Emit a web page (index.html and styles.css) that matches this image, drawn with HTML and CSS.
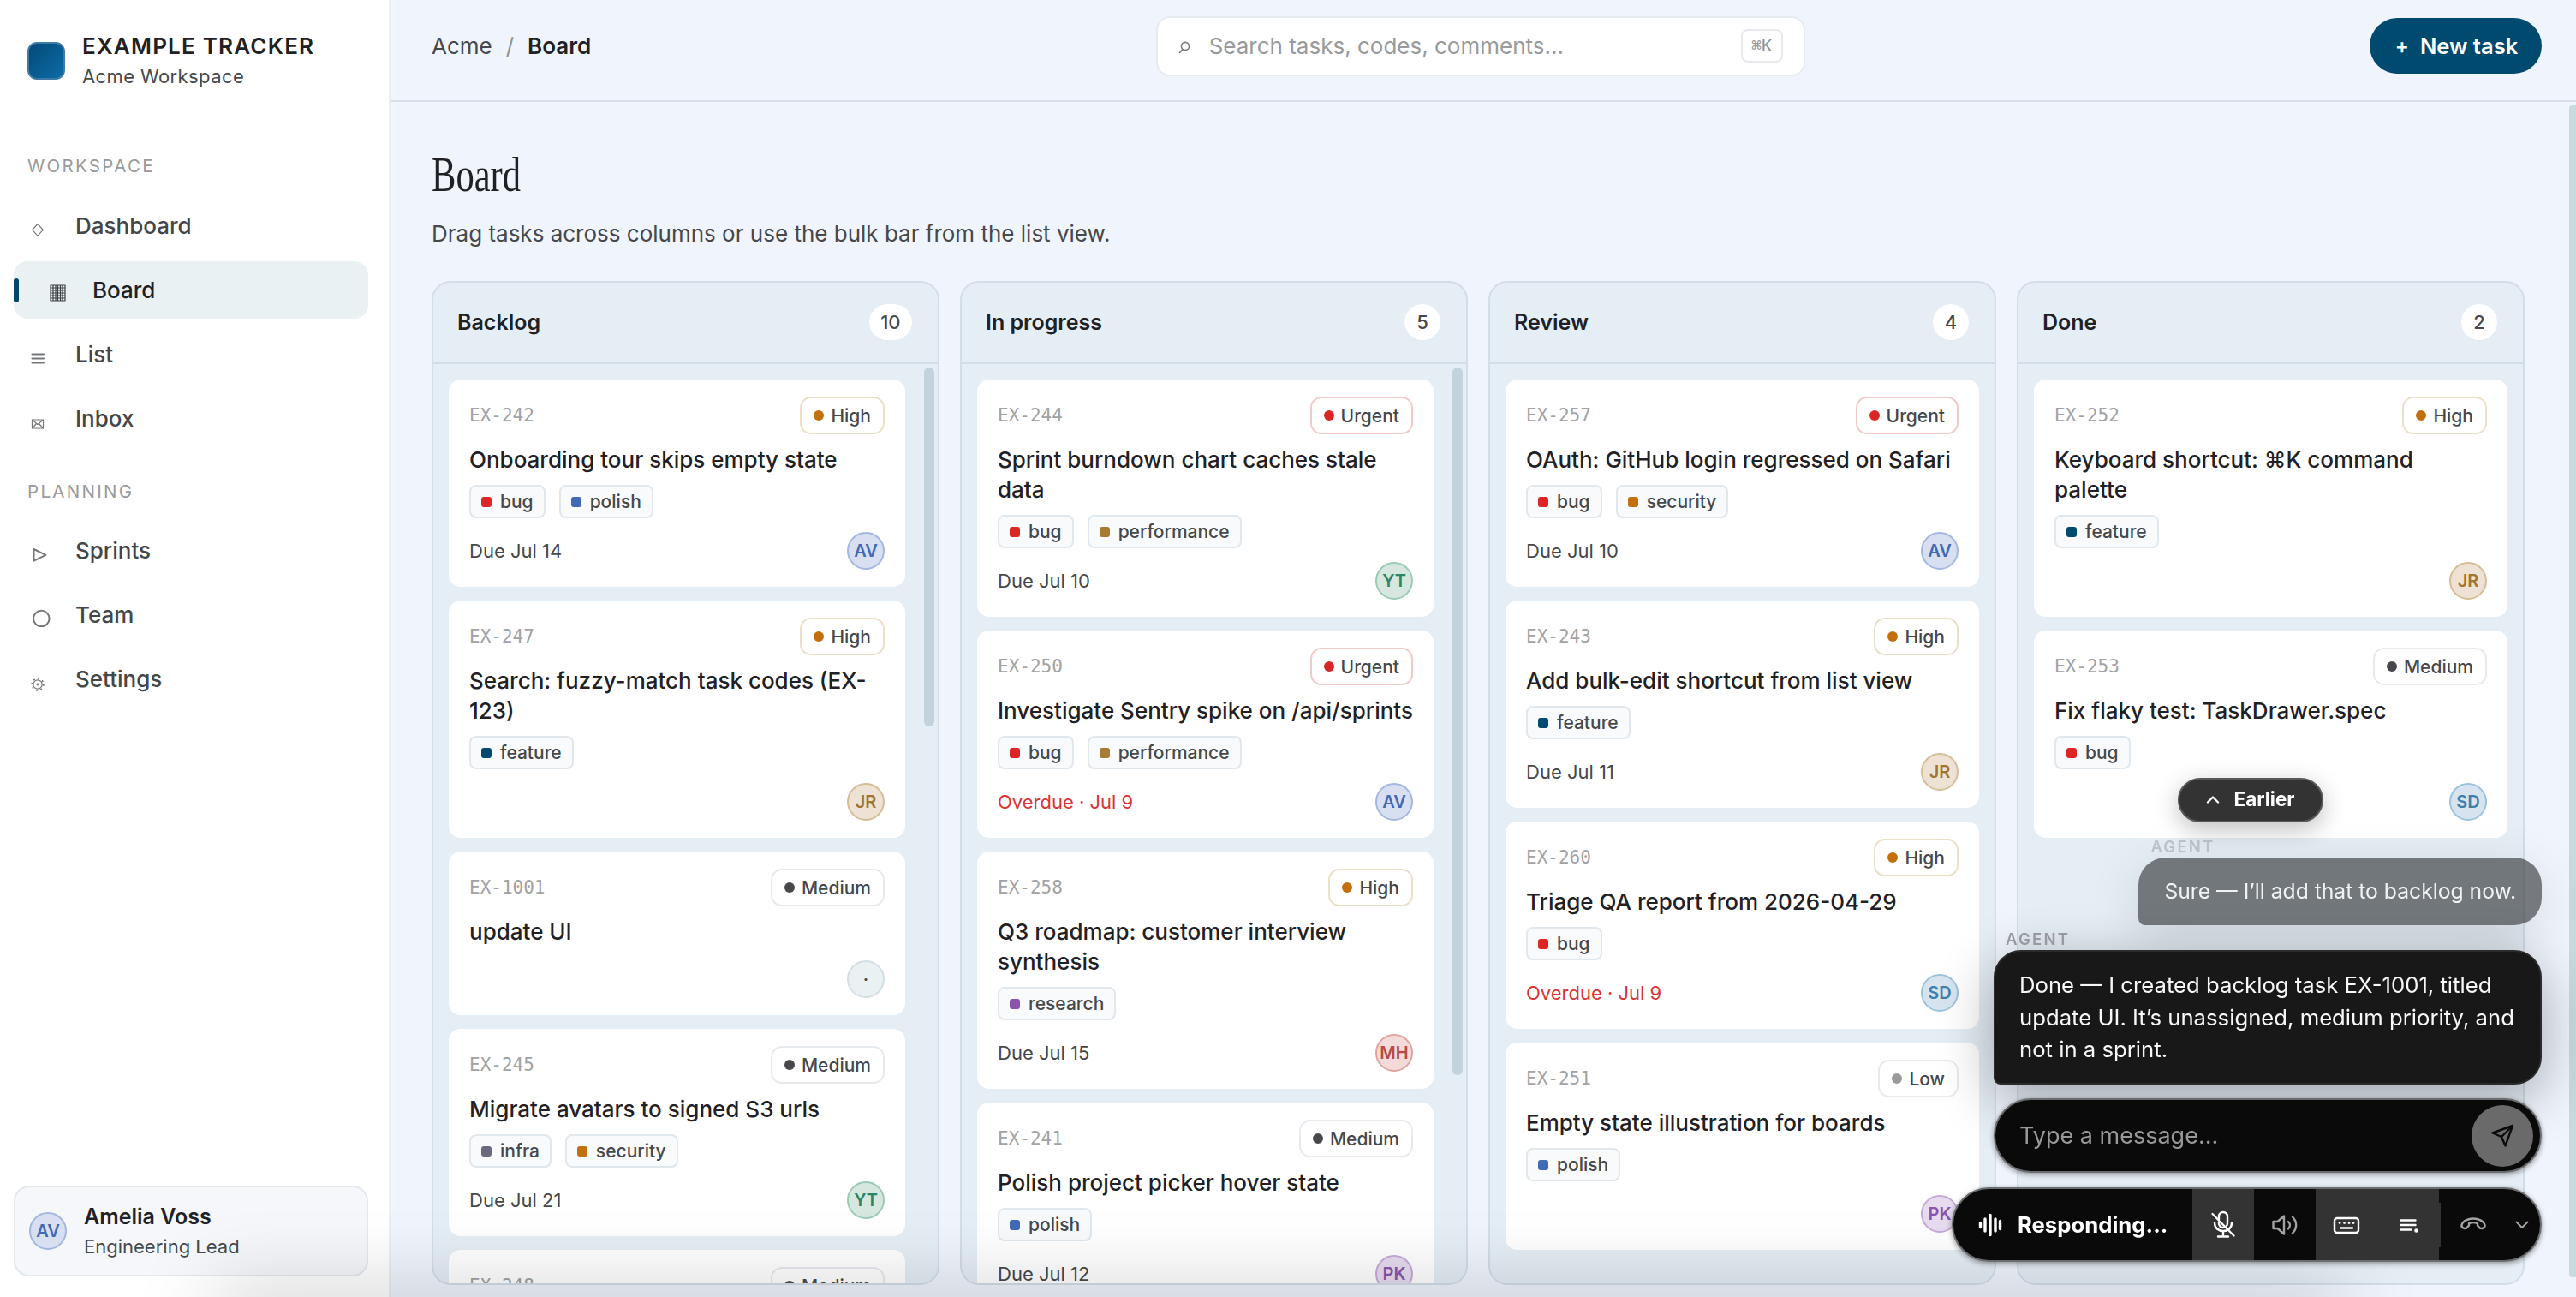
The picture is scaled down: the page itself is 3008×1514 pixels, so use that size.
FILE: index.html
```html
<!DOCTYPE html>
<html lang="en">
<head>
    <meta charset="UTF-8">
    <meta name="viewport" content="width=device-width, initial-scale=1.0">
    <title>Example Tracker - Board</title>
    <link rel="stylesheet" href="styles.css">
</head>
<body>
    <div class="app">
        <aside class="sidebar">
            <div class="brand">
                <div class="brand-logo"></div>
                <div>
                    <div class="brand-name">EXAMPLE TRACKER</div>
                    <div class="brand-sub">Acme Workspace</div>
                </div>
            </div>

            <div class="nav-label">WORKSPACE</div>
            <nav class="nav">
                <a class="nav-item">
                    <svg class="nav-icon" viewBox="0 0 28 28"><path d="M8 11.5l6.4 6.8L8 25.1 1.6 18.3z"/></svg>
                    Dashboard
                </a>
                <a class="nav-item active">
                    <span class="nav-bar"></span>
                    <svg class="nav-icon" viewBox="0 0 28 28"><path d="M3 8h17v18H3zM6 8v18M9 8v18M11.500 8v18M14.500 8v18M17 8v18M3 11h17M3 14h17M3 17h17M3 20h17M3 23h17"/></svg>
                    Board
                </a>
                <a class="nav-item">
                    <svg class="nav-icon thick" viewBox="0 0 28 28"><path d="M1.500 13.500h13.500M1.500 18.500h13.500M1.500 23.500h13.500"/></svg>
                    List
                </a>
                <a class="nav-item">
                    <svg class="nav-icon" viewBox="0 0 28 28"><path d="M1.500 15h13v10h-13zM1.500 15l6.500 5.500 6.500-5.500M1.500 25l5-5.500M14.500 25l-5-5.500M6 20h4"/></svg>
                    Inbox
                </a>
            </nav>

            <div class="nav-label planning">PLANNING</div>
            <nav class="nav">
                <a class="nav-item">
                    <svg class="nav-icon thick" viewBox="0 0 28 28"><path d="M3.500 12l14 6.800-14 6.800z"/></svg>
                    Sprints
                </a>
                <a class="nav-item">
                    <svg class="nav-icon thick" viewBox="0 0 28 28"><circle cx="12.300" cy="18" r="9.300"/></svg>
                    Team
                </a>
                <a class="nav-item">
                    <svg class="nav-icon" viewBox="0 0 28 28"><circle cx="8" cy="20" r="5.200"/><circle cx="8" cy="20" r=".8"/><circle class="teeth" cx="8" cy="20" r="6.800"/></svg>
                    Settings
                </a>
            </nav>

            <div class="user">
                <span class="avatar av">AV</span>
                <div>
                    <div class="user-name">Amelia Voss</div>
                    <div class="user-role">Engineering Lead</div>
                </div>
            </div>
        </aside>

        <div class="main">
            <header class="topbar">
                <div class="crumbs"><span>Acme</span><i>/</i><b>Board</b></div>
                <div class="search">
                    <svg class="search-icon" viewBox="0 0 14 16"><circle cx="8" cy="6" r="4.600"/><path d="M5 9.500L1.500 13.500"/></svg>
                    <span class="search-text">Search tasks, codes, comments…</span>
                    <kbd class="kbd">⌘K</kbd>
                </div>
                <button class="new-task"><span>+</span>New task</button>
            </header>

            <main class="page">
                <h1 class="page-title">Board</h1>
                <p class="page-sub">Drag tasks across columns or use the bulk bar from the list view.</p>

                <div class="board">
                    <section class="column">
                        <div class="column-head"><h2>Backlog</h2><span class="count">10</span></div>
                        <div class="column-body scrolls">
                            <article class="card">
                                <div class="card-top"><span class="code">EX-242</span><span class="prio high">High</span></div>
                                <div class="card-title">Onboarding tour skips empty state</div>
                                <div class="tags"><span class="tag bug">bug</span><span class="tag polish">polish</span></div>
                                <div class="card-foot"><span>Due Jul 14</span><span class="avatar av">AV</span></div>
                            </article>
                            <article class="card">
                                <div class="card-top"><span class="code">EX-247</span><span class="prio high">High</span></div>
                                <div class="card-title">Search: fuzzy-match task codes (EX-123)</div>
                                <div class="tags"><span class="tag feature">feature</span></div>
                                <div class="card-foot"><span></span><span class="avatar jr">JR</span></div>
                            </article>
                            <article class="card">
                                <div class="card-top"><span class="code">EX-1001</span><span class="prio medium">Medium</span></div>
                                <div class="card-title">update UI</div>
                                <div class="card-foot"><span></span><span class="avatar none">·</span></div>
                            </article>
                            <article class="card">
                                <div class="card-top"><span class="code">EX-245</span><span class="prio medium">Medium</span></div>
                                <div class="card-title">Migrate avatars to signed S3 urls</div>
                                <div class="tags"><span class="tag infra">infra</span><span class="tag security">security</span></div>
                                <div class="card-foot"><span>Due Jul 21</span><span class="avatar yt">YT</span></div>
                            </article>
                            <article class="card">
                                <div class="card-top"><span class="code">EX-248</span><span class="prio medium">Medium</span></div>
                            </article>
                        </div>
                        <div class="thumb thumb-backlog"></div>
                    </section>

                    <section class="column">
                        <div class="column-head"><h2>In progress</h2><span class="count">5</span></div>
                        <div class="column-body scrolls">
                            <article class="card">
                                <div class="card-top"><span class="code">EX-244</span><span class="prio urgent">Urgent</span></div>
                                <div class="card-title">Sprint burndown chart caches stale data</div>
                                <div class="tags"><span class="tag bug">bug</span><span class="tag performance">performance</span></div>
                                <div class="card-foot"><span>Due Jul 10</span><span class="avatar yt">YT</span></div>
                            </article>
                            <article class="card">
                                <div class="card-top"><span class="code">EX-250</span><span class="prio urgent">Urgent</span></div>
                                <div class="card-title">Investigate Sentry spike on /api/sprints</div>
                                <div class="tags"><span class="tag bug">bug</span><span class="tag performance">performance</span></div>
                                <div class="card-foot"><span class="overdue">Overdue · Jul 9</span><span class="avatar av">AV</span></div>
                            </article>
                            <article class="card">
                                <div class="card-top"><span class="code">EX-258</span><span class="prio high">High</span></div>
                                <div class="card-title">Q3 roadmap: customer interview synthesis</div>
                                <div class="tags"><span class="tag research">research</span></div>
                                <div class="card-foot"><span>Due Jul 15</span><span class="avatar mh">MH</span></div>
                            </article>
                            <article class="card">
                                <div class="card-top"><span class="code">EX-241</span><span class="prio medium">Medium</span></div>
                                <div class="card-title">Polish project picker hover state</div>
                                <div class="tags"><span class="tag polish">polish</span></div>
                                <div class="card-foot"><span>Due Jul 12</span><span class="avatar pk">PK</span></div>
                            </article>
                        </div>
                        <div class="thumb thumb-progress"></div>
                    </section>

                    <section class="column">
                        <div class="column-head"><h2>Review</h2><span class="count">4</span></div>
                        <div class="column-body">
                            <article class="card">
                                <div class="card-top"><span class="code">EX-257</span><span class="prio urgent">Urgent</span></div>
                                <div class="card-title">OAuth: GitHub login regressed on Safari</div>
                                <div class="tags"><span class="tag bug">bug</span><span class="tag security">security</span></div>
                                <div class="card-foot"><span>Due Jul 10</span><span class="avatar av">AV</span></div>
                            </article>
                            <article class="card">
                                <div class="card-top"><span class="code">EX-243</span><span class="prio high">High</span></div>
                                <div class="card-title">Add bulk-edit shortcut from list view</div>
                                <div class="tags"><span class="tag feature">feature</span></div>
                                <div class="card-foot"><span>Due Jul 11</span><span class="avatar jr">JR</span></div>
                            </article>
                            <article class="card">
                                <div class="card-top"><span class="code">EX-260</span><span class="prio high">High</span></div>
                                <div class="card-title">Triage QA report from 2026-04-29</div>
                                <div class="tags"><span class="tag bug">bug</span></div>
                                <div class="card-foot"><span class="overdue">Overdue · Jul 9</span><span class="avatar sd">SD</span></div>
                            </article>
                            <article class="card">
                                <div class="card-top"><span class="code">EX-251</span><span class="prio low">Low</span></div>
                                <div class="card-title">Empty state illustration for boards</div>
                                <div class="tags"><span class="tag polish">polish</span></div>
                                <div class="card-foot"><span></span><span class="avatar pk">PK</span></div>
                            </article>
                        </div>
                    </section>

                    <section class="column">
                        <div class="column-head"><h2>Done</h2><span class="count">2</span></div>
                        <div class="column-body">
                            <article class="card">
                                <div class="card-top"><span class="code">EX-252</span><span class="prio high">High</span></div>
                                <div class="card-title">Keyboard shortcut: ⌘K command palette</div>
                                <div class="tags"><span class="tag feature">feature</span></div>
                                <div class="card-foot"><span></span><span class="avatar jr">JR</span></div>
                            </article>
                            <article class="card">
                                <div class="card-top"><span class="code">EX-253</span><span class="prio medium">Medium</span></div>
                                <div class="card-title">Fix flaky test: TaskDrawer.spec</div>
                                <div class="tags"><span class="tag bug">bug</span></div>
                                <div class="card-foot"><span></span><span class="avatar sd">SD</span></div>
                            </article>
                        </div>
                    </section>
                </div>
            </main>
            <div class="page-thumb"></div>
        </div>
    </div>

    <div class="bottom-shade"></div>

    <div class="agent">
        <div class="earlier-row">
            <button class="earlier">
                <svg class="chev" viewBox="0 0 16 10"><path d="M2 8.500l6-6 6 6"/></svg>
                Earlier
            </button>
        </div>
        <div class="msg faded">
            <div class="msg-from">AGENT</div>
            <div class="bubble">Sure — I’ll add that to backlog now.</div>
        </div>
        <div class="msg">
            <div class="msg-from">AGENT</div>
            <div class="bubble">Done — I created backlog task EX-1001, titled update UI. It’s unassigned, medium priority, and not in a sprint.</div>
        </div>
        <div class="composer">
            <span class="placeholder">Type a message...</span>
            <button class="send">
                <svg viewBox="0 0 32 32"><path d="M28 4L4.500 12.500l10.500 4.500 4.500 10.500zM28 4L15 17"/></svg>
            </button>
        </div>
        <div class="callbar">
            <div class="status">
                <svg class="wave" viewBox="0 0 28 28"><path d="M2.500 11.500v5M8 7v14M14 2.500v23M20 7v14M25.500 9.500v9"/></svg>
                Responding...
            </div>
            <button class="seg on">
                <svg viewBox="0 0 32 36"><path d="M11 8a5 5 0 0 1 10 0v8a5 5 0 0 1-10 0zM6 15.500c0 6 4.500 9.500 10 9.500s10-3.500 10-9.500M16 25v6M10 31.500h12M3.500 5l25 25.500"/></svg>
            </button>
            <button class="seg dim">
                <svg viewBox="0 0 32 36"><path d="M2.500 14h5l7.500-6.500v21L7.500 22h-5zM20 14c2.500 2.500 2.500 6 0 8.500M25 8.500c5.500 5.500 5.500 13.500 0 19"/></svg>
            </button>
            <button class="seg on">
                <svg viewBox="0 0 32 36"><rect x="2" y="10" width="28" height="17" rx="3"/><path class="dots" d="M8 15.500h.1M13.500 15.500h.1M19 15.500h.1M24 15.500h.1"/><path d="M9 21.500h14"/></svg>
            </button>
            <button class="seg on">
                <svg viewBox="0 0 32 36"><path d="M7.500 12.500h17M7.500 18h17M7.500 23.500h12"/><circle class="fill" cx="25.500" cy="24.500" r="2.300"/></svg>
            </button>
            <span class="seg-line"></span>
            <button class="seg dim hang">
                <svg viewBox="0 0 32 36"><path d="M2.500 18c3-10 24-10 27 0 .3 2-1 3.500-3 4l-2.500-.3-3-3.200v-2.500c-3-1-7-1-10 0v2.500l-3 3.200-2.500.3c-2-.5-3.300-2-3-4z"/></svg>
            </button>
            <svg class="chev more" viewBox="0 0 16 10"><path d="M1.500 1.500l6.500 6.500 6.500-6.500"/></svg>
        </div>
    </div>
</body>
</html>
```
FILE: styles.css
```css
* {
    box-sizing: border-box;
}

body {
    margin: 0;
    height: 1514px;
    overflow: hidden;
    font-family: Inter, "Liberation Sans", sans-serif;
    font-size: 26px;
    color: #1f2124;
    background-color: #eff4fd;
}

button {
    border: none;
    padding: 0;
    font-family: inherit;
    background: none;
}

svg {
    display: block;
    fill: none;
    stroke: currentColor;
    stroke-linecap: round;
    stroke-linejoin: round;
}

.app {
    display: flex;
    height: 100%;
}

/* sidebar */
.sidebar {
    display: flex;
    flex-direction: column;
    flex: none;
    width: 456px;
    padding: 36px 24px 24px 16px;
    background-color: #fff;
    border-right: 2px solid #e9eef2;
}

.brand {
    display: flex;
    align-items: center;
    gap: 20px;
    padding-left: 16px;
    margin-bottom: 75px;
}

.brand-logo {
    width: 44px;
    height: 44px;
    margin-top: -2px;
    border-radius: 11px;
    border: 2px solid #3d7ba6;
    background: linear-gradient(135deg, #034a78, #0d6ba6);
}

.brand-name {
    font-weight: 600;
    letter-spacing: 1.2px;
    line-height: 36px;
}

.brand-sub {
    font-size: 22px;
    line-height: 35px;
    letter-spacing: 0.4px;
    color: #46484b;
}

.nav-label {
    padding-left: 16px;
    margin-bottom: 24px;
    font-size: 20.5px;
    line-height: 24px;
    letter-spacing: 2.3px;
    color: #989a9c;
}

.nav-label.planning {
    margin-top: 40px;
    margin-bottom: 23px;
}

.nav {
    display: flex;
    flex-direction: column;
    gap: 8px;
}

.nav-item {
    display: flex;
    align-items: center;
    gap: 24px;
    height: 67px;
    padding-left: 20px;
    border-radius: 16px;
    font-weight: 500;
    color: #444648;
}

.nav-item.active {
    padding-left: 0;
    color: #1f2124;
    background-color: #e9f1f3;
}

.nav-bar {
    width: 6px;
    height: 28px;
    margin-right: 10px;
    border-radius: 3px;
    background-color: #00486e;
}

.nav-icon {
    width: 28px;
    height: 28px;
    stroke-width: 1.2;
    color: #75777a;
}

.active .nav-icon {
    color: #3c4043;
}

.nav-icon.thick {
    stroke-width: 2;
}

.teeth {
    stroke-width: 1.8;
    stroke-dasharray: 1.8 3.54;
    stroke-linecap: butt;
}

.user {
    display: flex;
    align-items: center;
    gap: 20px;
    height: 106px;
    margin-top: auto;
    padding-left: 16px;
    border: 2px solid #e2e8ec;
    border-radius: 18px;
    background-color: #f5f7fa;
}

.user-name {
    font-weight: 600;
    font-size: 25px;
    line-height: 35px;
}

.user-role {
    font-size: 22px;
    line-height: 34px;
    color: #46484b;
}

/* avatars */
.avatar {
    display: flex;
    align-items: center;
    justify-content: center;
    flex: none;
    width: 44px;
    height: 44px;
    border: 2px solid;
    border-radius: 50%;
    font-size: 20px;
    font-weight: 600;
}

.avatar.av { color: #4169b5; background-color: #d8dff0; border-color: #a3b7e0; }
.avatar.jr { color: #a3742f; background-color: #ede2d3; border-color: #d6bd97; }
.avatar.yt { color: #2e8463; background-color: #d5e7df; border-color: #9bcab5; }
.avatar.mh { color: #b84a48; background-color: #f3dbda; border-color: #e0a3a1; }
.avatar.pk { color: #8a55ab; background-color: #e6dbef; border-color: #c6a9d9; }
.avatar.sd { color: #3d7fad; background-color: #d7e4ef; border-color: #9dc3dc; }
.avatar.none { color: #46484b; background-color: #e9f1f3; border-color: #d3dfe3; }

/* top bar */
.main {
    position: relative;
    flex: 1;
    min-width: 0;
}

.topbar {
    display: flex;
    align-items: center;
    justify-content: space-between;
    height: 119px;
    padding: 0 40px 10px 48px;
    border-bottom: 2px solid #d7dfe8;
}

.crumbs {
    display: flex;
    gap: 16px;
    color: #46484b;
}

.crumbs i {
    font-style: normal;
    color: #8f9193;
}

.crumbs b {
    font-weight: 600;
    color: #1f2124;
}

.search {
    display: flex;
    align-items: center;
    width: 758px;
    height: 70px;
    padding: 0 24px;
    border: 2px solid #e6ebf0;
    border-radius: 16px;
    background-color: #fff;
}

.search-icon {
    width: 14px;
    height: 16px;
    margin-top: 4px;
    stroke-width: 1.6;
    color: #75777a;
}

.search-text {
    flex: 1;
    padding-left: 22px;
    color: #989a9c;
}

.kbd {
    width: 49px;
    height: 39px;
    border: 2px solid #e6e9ee;
    border-radius: 8px;
    font-family: "DejaVu Sans Mono", "Liberation Mono", monospace;
    font-size: 20px;
    line-height: 35px;
    text-align: center;
    color: #8f9193;
}

.new-task {
    display: flex;
    align-items: center;
    justify-content: center;
    gap: 13px;
    width: 201px;
    height: 65px;
    padding-left: 2px;
    border-radius: 33px;
    font-size: 25.5px;
    font-weight: 600;
    color: #fff;
    background-color: #004a70;
}

.new-task span {
    font-size: 24px;
}

/* page */
.page {
    padding: 55px 60px 0 48px;
}

.page-title {
    margin: 0 0 21px;
    font-family: "Liberation Serif", serif;
    font-size: 56px;
    font-weight: 400;
    line-height: 60px;
    transform: scaleX(0.76);
    transform-origin: left;
}

.page-sub {
    margin: 0 0 37px;
    line-height: 36px;
    color: #46484b;
}

.board {
    display: grid;
    grid-template-columns: repeat(4, 1fr);
    gap: 24px;
    height: 1172px;
}

.column {
    position: relative;
    display: flex;
    flex-direction: column;
    min-width: 0;
    min-height: 0;
    overflow: hidden;
    border: 2px solid #d3dde6;
    border-radius: 22px;
    background-color: #e5edf5;
}

.column-head {
    display: flex;
    align-items: center;
    justify-content: space-between;
    flex: none;
    height: 95px;
    padding: 0 30px 2px 28px;
    border-bottom: 2px solid #d3dde6;
}

.column-head h2 {
    margin: 0;
    font-size: 25px;
    font-weight: 600;
}

.count {
    min-width: 42px;
    height: 42px;
    padding: 0 13.500px;
    border-radius: 21px;
    font-size: 22px;
    font-weight: 500;
    line-height: 42px;
    text-align: center;
    color: #46484b;
    background-color: #fff;
}

.column-body {
    display: flex;
    flex-direction: column;
    gap: 16px;
    flex: 1;
    min-height: 0;
    padding: 18px;
    overflow: hidden;
}

.column-body.scrolls {
    padding-right: 38px;
}

.thumb {
    position: absolute;
    top: 99px;
    right: 4px;
    width: 12px;
    border-radius: 6px;
    background-color: #c3d3de;
}

.thumb-backlog {
    height: 419px;
}

.thumb-progress {
    height: 826px;
}

.page-thumb {
    position: absolute;
    top: 123px;
    right: 0;
    width: 8px;
    height: 1368px;
    border-radius: 4px 0 0 4px;
    background-color: #c7dade;
}

/* cards */
.card {
    flex: none;
    padding: 20px 24px;
    border-radius: 14px;
    background-color: #fff;
}

.card-top {
    display: flex;
    align-items: center;
    justify-content: space-between;
    height: 44px;
    margin-bottom: 12px;
}

.code {
    font-family: "DejaVu Sans Mono", "Liberation Mono", monospace;
    font-size: 21px;
    color: #a0a2a4;
}

.prio {
    display: flex;
    align-items: center;
    gap: 8px;
    height: 44px;
    padding: 0 14px;
    border: 2px solid #e6eaef;
    border-radius: 13px;
    font-size: 21px;
    font-weight: 500;
    color: #46484b;
}

.prio::before {
    content: "";
    width: 12px;
    height: 12px;
    border-radius: 50%;
    background-color: #46484b;
}

.prio.high { border-color: #ebdfc8; }
.prio.high::before { background-color: #c36f0c; }
.prio.urgent { border-color: #f2c9c9; }
.prio.urgent::before { background-color: #dc2626; }
.prio.low::before { background-color: #989a9c; }

.card-title {
    line-height: 35px;
    font-weight: 500;
}

.tags {
    display: flex;
    gap: 16px;
    margin-top: 12px;
}

.tag {
    display: flex;
    align-items: center;
    gap: 10px;
    height: 39px;
    padding: 0 12px;
    border: 2px solid #e0e7ed;
    border-radius: 8px;
    font-size: 21px;
    font-weight: 500;
    color: #46484b;
    background-color: #f8fafc;
}

.tag::before {
    content: "";
    width: 12px;
    height: 12px;
    border-radius: 3px;
}

.tag.bug::before { background-color: #dc2626; }
.tag.polish::before { background-color: #4169b5; }
.tag.feature::before { background-color: #004a70; }
.tag.performance::before { background-color: #a87b35; }
.tag.security::before { background-color: #c36f0c; }
.tag.research::before { background-color: #8a55ab; }
.tag.infra::before { background-color: #6b6b80; }

.card-foot {
    display: flex;
    align-items: center;
    justify-content: space-between;
    margin-top: 16px;
    font-size: 22px;
    color: #46484b;
}

.overdue {
    color: #dc3434;
}

/* soft shade rising from the bottom edge */
.bottom-shade {
    position: fixed;
    left: 250px;
    right: 270px;
    bottom: -40px;
    height: 40px;
    box-shadow: 0 -6px 90px rgba(0, 0, 0, 0.27);
    pointer-events: none;
}

/* agent overlay */
.agent {
    position: fixed;
    right: 40px;
    bottom: 41px;
    display: flex;
    flex-direction: column;
    align-items: flex-end;
}

.earlier-row {
    display: flex;
    justify-content: center;
    width: 680px;
    margin-bottom: 17px;
}

.earlier {
    display: flex;
    align-items: center;
    justify-content: center;
    gap: 16px;
    width: 170px;
    height: 52px;
    padding-bottom: 2px;
    border: 2px solid #595959;
    border-radius: 26px;
    font-size: 22.5px;
    font-weight: 700;
    color: #fff;
    background-color: #333;
    box-shadow: 0 8px 28px rgba(0, 0, 0, 0.25);
}

.chev {
    width: 16px;
    height: 10px;
    stroke-width: 2.4;
}

.msg {
    max-width: 640px;
    margin-bottom: 16px;
}

.msg.faded {
    margin-bottom: 5px;
}

.msg-from {
    padding-left: 14px;
    margin-bottom: 2px;
    font-size: 18.5px;
    font-weight: 600;
    line-height: 22px;
    letter-spacing: 2.2px;
    color: #96999d;
}

.bubble {
    padding: 20px 28px;
    border: 2px solid #2b2b2b;
    border-radius: 32px 32px 32px 8px;
    font-size: 25.7px;
    line-height: 37.6px;
    color: #f7f7f7;
    background-color: #181818;
    box-shadow: 0 16px 64px rgba(0, 0, 0, 0.32);
}

.faded .msg-from {
    opacity: 0.5;
}

.faded .bubble {
    padding: 19px 28px;
    border-color: transparent;
    font-size: 24.7px;
    color: #f1f2f3;
    background-color: rgba(24, 26, 28, 0.56);
    box-shadow: 0 16px 64px rgba(0, 0, 0, 0.12);
}

.composer {
    display: flex;
    align-items: center;
    justify-content: space-between;
    width: 640px;
    height: 87px;
    margin-bottom: 17px;
    padding: 0 8px 0 28px;
    border: 2px solid #6b6d70;
    border-radius: 44px;
    font-size: 27px;
    background-color: #0a0a0a;
    box-shadow: 0 2px 6px rgba(0, 0, 0, 0.4);
}

.placeholder {
    color: #989898;
}

.send {
    display: flex;
    align-items: center;
    justify-content: center;
    width: 72px;
    height: 72px;
    border-radius: 50%;
    color: #0a0a0a;
    background-color: #6a6a6a;
}

.send svg {
    width: 32px;
    height: 32px;
    stroke-width: 2.4;
}

.callbar {
    display: flex;
    align-items: center;
    width: 689px;
    height: 87px;
    overflow: hidden;
    border: 2px solid #6b6d70;
    border-radius: 44px;
    color: #fff;
    background-color: #0a0a0a;
    box-shadow: 0 2px 6px rgba(0, 0, 0, 0.4);
}

.status {
    display: flex;
    align-items: center;
    gap: 18px;
    width: 279px;
    flex: none;
    padding-left: 29px;
    font-size: 25.7px;
    font-weight: 700;
}

.wave {
    width: 28px;
    height: 28px;
    stroke-width: 3.4;
}

.seg {
    display: flex;
    align-items: center;
    justify-content: center;
    flex: none;
    width: 72px;
    height: 100%;
    color: #fff;
}

.seg svg {
    width: 32px;
    height: 36px;
    stroke-width: 2.4;
}

.seg.on {
    background-color: #333;
}

.seg.dim {
    color: #a3a3a3;
}

.seg .fill {
    fill: currentColor;
    stroke: none;
}

.seg .dots {
    stroke-width: 2.8;
}

.seg-line {
    width: 2px;
    height: 52px;
    background-color: #333;
}

.hang {
    width: 76px;
}

.more {
    margin-left: 11px;
    color: #a3a3a3;
    stroke-width: 2;
}
```
